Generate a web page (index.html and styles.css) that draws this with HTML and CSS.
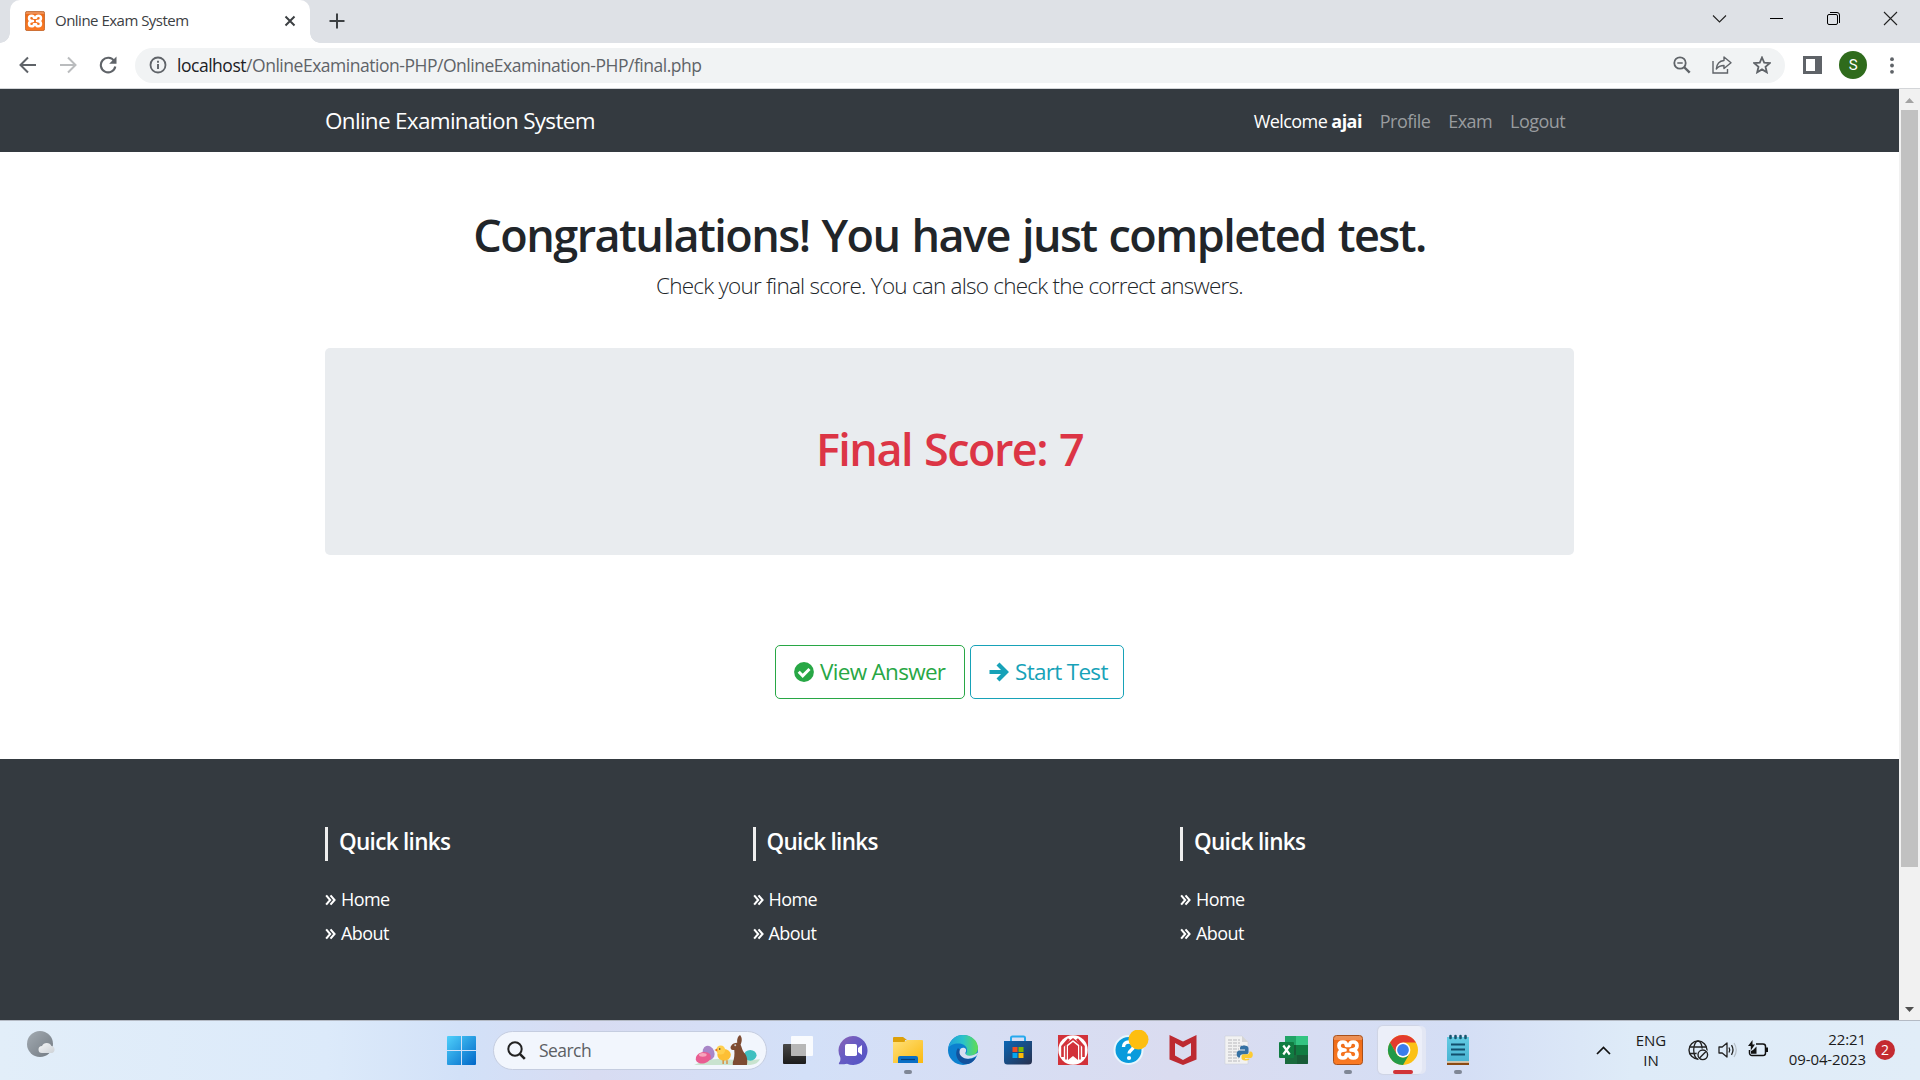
FILE: index.html
```html
<!DOCTYPE html>
<html lang="en">
<head>
<meta charset="utf-8">
<title>Online Exam System</title>
<link rel="stylesheet" href="styles.css">
</head>
<body>
<svg class="defs" aria-hidden="true">
  <defs>
    <linearGradient id="win" x1="0" y1="0" x2="1" y2="1"><stop offset="0" stop-color="#4fd0fb"/><stop offset="1" stop-color="#0067c8"/></linearGradient>
    <linearGradient id="orange" x1="0" y1="0" x2="0" y2="1"><stop offset="0" stop-color="#e9935c"/><stop offset=".14" stop-color="#f08c4e"/><stop offset=".15" stop-color="#ee6b17"/><stop offset="1" stop-color="#fb7a24"/></linearGradient>
    <linearGradient id="chat" x1="0" y1="0" x2="1" y2="1"><stop offset="0" stop-color="#8d62b4"/><stop offset=".4" stop-color="#6a5cc2"/><stop offset="1" stop-color="#4f52c6"/></linearGradient>
    <linearGradient id="folder" x1="0" y1="0" x2="1" y2="1"><stop offset="0" stop-color="#ffe07a"/><stop offset="1" stop-color="#fbb90f"/></linearGradient>
    <linearGradient id="edgeTop" x1="0" y1="0" x2="1" y2="0"><stop offset="0" stop-color="#1fa0dc"/><stop offset=".5" stop-color="#2bc3c9"/><stop offset="1" stop-color="#62dd50"/></linearGradient>
    <linearGradient id="store" x1="0" y1="0" x2="1" y2="1"><stop offset="0" stop-color="#0b66b5"/><stop offset="1" stop-color="#28304d"/></linearGradient>
    <linearGradient id="dark" x1="0" y1="0" x2="0" y2="1"><stop offset="0" stop-color="#484848"/><stop offset="1" stop-color="#1c1c1c"/></linearGradient>
    <linearGradient id="moon" x1="0" y1="0" x2="1" y2="1"><stop offset="0" stop-color="#a3abb2"/><stop offset="1" stop-color="#727a82"/></linearGradient>
    <linearGradient id="cloud" x1="0" y1="0" x2="1" y2="1"><stop offset="0" stop-color="#f4f5f6"/><stop offset="1" stop-color="#cdd2d7"/></linearGradient>
    <linearGradient id="note" x1="0" y1="0" x2="0" y2="1"><stop offset="0" stop-color="#63cbe3"/><stop offset="1" stop-color="#48b3d2"/></linearGradient>
    <symbol id="xampp" viewBox="0 0 30 30">
      <rect x=".5" y=".5" width="29" height="29" rx="3" fill="url(#orange)" stroke="#a9501a"/>
      <path d="M12 15c-4 0-6-1.400-6-4.300C6 8.200 7.600 7 9.800 7S13.400 8.300 13.400 10.300h3.200C16.600 8.300 18 7 20.200 7S24 8.200 24 10.700C24 13.600 22 15 18 15c4 0 6 1.400 6 4.300 0 2.500-1.600 3.700-3.800 3.700s-3.600-1.300-3.600-3.300h-3.200c0 2-1.400 3.300-3.600 3.300S6 21.800 6 19.300C6 16.400 8 15 12 15z" fill="none" stroke="#fff" stroke-width="3.700" stroke-linejoin="round"/>
    </symbol>
    <symbol id="angles" viewBox="0 0 10 11"><path d="M1 1.200 4.700 5.500 1 9.800M5 1.200 8.700 5.500 5 9.800" fill="none" stroke="#fff" stroke-width="1.900"/></symbol>
  </defs>
</svg>

<header class="browser">
  <div class="tabstrip">
    <div class="tab">
      <svg class="tab-icon" viewBox="0 0 30 30"><use href="#xampp"/></svg>
      <span class="tab-title">Online Exam System</span>
      <svg class="tab-close" viewBox="0 0 12 12"><path d="M1.500 1.500l9 9m0-9l-9 9" stroke="#3c4043" stroke-width="2"/></svg>
    </div>
    <svg class="new-tab" viewBox="0 0 16 16"><path d="M8 .5v15M.5 8h15" stroke="#3c4043" stroke-width="2"/></svg>
    <div class="window-controls">
      <svg viewBox="0 0 15 15"><path d="M1 4.500l6.500 6.500L14 4.500" fill="none" stroke="#222" stroke-width="1.100"/></svg>
      <svg viewBox="0 0 15 15"><path d="M1 7.500h13" stroke="#000" stroke-width="1"/></svg>
      <svg viewBox="0 0 15 15"><rect x="1.500" y="3.500" width="10" height="10" rx="1.500" fill="none" stroke="#000"/><path d="M4 1.500h7a2.500 2.500 0 0 1 2.500 2.500v8" fill="none" stroke="#000"/></svg>
      <svg viewBox="0 0 15 15"><path d="M1 1l13 13M14 1L1 14" stroke="#222" stroke-width="1.100"/></svg>
    </div>
  </div>
  <div class="toolbar">
    <nav class="history">
      <svg viewBox="0 0 18 18"><path d="M17 9H2M9 1.500L1.500 9 9 16.500" fill="none" stroke="#5f6368" stroke-width="2"/></svg>
      <svg viewBox="0 0 18 18"><path d="M1 9h15M9 1.500L16.500 9 9 16.500" fill="none" stroke="#babcbe" stroke-width="2"/></svg>
      <svg viewBox="0 0 18 18"><path d="M15.200 5A7.300 7.300 0 1 0 16.300 10.500" fill="none" stroke="#5f6368" stroke-width="2.100"/><path d="M17.500.5v7.300h-7.300z" fill="#5f6368"/></svg>
    </nav>
    <div class="omnibox">
      <svg class="info" viewBox="0 0 18 18"><circle cx="9" cy="9" r="7.500" fill="none" stroke="#5f6368" stroke-width="1.800"/><path d="M9 8v5M9 4.800v2" stroke="#5f6368" stroke-width="1.900"/></svg>
      <span class="url"><span class="host">localhost</span>/OnlineExamination-PHP/OnlineExamination-PHP/final.php</span>
      <div class="omni-actions">
        <svg viewBox="0 0 18 18"><circle cx="7" cy="7" r="5.700" fill="none" stroke="#5f6368" stroke-width="1.800"/><path d="M4.300 7h5.400" stroke="#5f6368" stroke-width="1.500"/><path d="M11 11l5.700 5.700" stroke="#5f6368" stroke-width="2.400"/></svg>
        <svg class="share" viewBox="0 0 20 18"><path d="M1 5v12h14.500v-4" fill="none" stroke="#5f6368" stroke-width="1.400"/><path d="M12 1l7 5.800-7 5.700V9.500C8.500 9.500 6 10.800 4.300 13c.4-4.500 3-8 7.700-8.500z" fill="none" stroke="#5f6368" stroke-width="1.400" stroke-linejoin="round"/></svg>
        <svg viewBox="0 0 18 18"><path d="M9 1.500l2.200 5.100 5.500.5-4.200 3.700 1.300 5.500L9 13.400l-4.800 2.900 1.300-5.500L1.300 7.100l5.500-.5z" fill="none" stroke="#5f6368" stroke-width="1.800"/></svg>
      </div>
    </div>
    <svg class="side-panel" viewBox="0 0 19 18"><path d="M0 0h19v18H0zM3 3v12h9V3z" fill="#5f6368" fill-rule="evenodd"/></svg>
    <span class="avatar">S</span>
    <svg class="menu" viewBox="0 0 4 17"><circle cx="2" cy="2.200" r="1.900"/><circle cx="2" cy="8.500" r="1.900"/><circle cx="2" cy="14.800" r="1.900"/></svg>
  </div>
</header>

<div class="viewport">
  <div class="page">
    <nav class="navbar">
      <div class="container nav-inner">
        <span class="brand">Online Examination System</span>
        <ul class="nav-links">
          <li class="current">Welcome <strong>ajai</strong></li>
          <li>Profile</li>
          <li>Exam</li>
          <li>Logout</li>
        </ul>
      </div>
    </nav>
    <main class="container result">
      <h1 class="headline">Congratulations! You have just completed test.</h1>
      <p class="lead">Check your final score. You can also check the correct answers.</p>
      <section class="score"><h1>Final Score: 7</h1></section>
      <div class="actions">
        <a class="btn btn-success"><svg viewBox="0 0 20 20"><circle cx="10" cy="10" r="9.900" fill="currentColor"/><path d="M4.700 9.800l4 4 6.800-6.800" fill="none" stroke="#fff" stroke-width="3"/></svg><span>View Answer</span></a>
        <a class="btn btn-info"><svg viewBox="0 0 20 20"><path d="M.5 10h17M9 2l8 8-8 8" fill="none" stroke="currentColor" stroke-width="4.200"/></svg><span>Start Test</span></a>
      </div>
    </main>
    <footer class="footer">
      <div class="container footer-cols">
        <section><h5>Quick links</h5><ul><li><svg><use href="#angles"/></svg>Home</li><li><svg><use href="#angles"/></svg>About</li></ul></section>
        <section><h5>Quick links</h5><ul><li><svg><use href="#angles"/></svg>Home</li><li><svg><use href="#angles"/></svg>About</li></ul></section>
        <section><h5>Quick links</h5><ul><li><svg><use href="#angles"/></svg>Home</li><li><svg><use href="#angles"/></svg>About</li></ul></section>
      </div>
    </footer>
  </div>
  <div class="scrollbar">
    <svg viewBox="0 0 9 5"><path d="M0 5l4.500-5L9 5z" fill="#a3a3a3"/></svg>
    <div class="thumb"></div>
    <svg viewBox="0 0 9 5"><path d="M0 0l4.500 5L9 0z" fill="#505050"/></svg>
  </div>
</div>

<footer class="taskbar">
  <svg class="weather" viewBox="0 0 30 28"><circle cx="13" cy="13" r="13" fill="url(#moon)"/><path d="M15 22a3.500 3.500 0 0 1 0-7 5.200 5.200 0 0 1 9.500 0A3.600 3.600 0 0 1 25 22z" fill="url(#cloud)"/></svg>
  <svg class="start" viewBox="0 0 29 29"><path d="M1 0h13v14H0V1a1 1 0 0 1 1-1zM15 0h13a1 1 0 0 1 1 1v13H15zM0 15h14v14H1a1 1 0 0 1-1-1zM15 15h14v13a1 1 0 0 1-1 1H15z" fill="url(#win)"/></svg>
  <div class="search">
    <svg class="lens" viewBox="0 0 19 19"><circle cx="8" cy="8" r="6.700" fill="none" stroke="#222" stroke-width="2"/><path d="M12.800 12.800l5 5" stroke="#222" stroke-width="2.600"/></svg>
    <span>Search</span>
    <svg class="easter" viewBox="0 0 68 32">
      <path d="M0 31Q16 23 34 25t34 0q-2 5-10 6z" fill="#c9e3cf"/>
      <ellipse cx="15" cy="18.500" rx="6" ry="7.500" fill="#a886c8" transform="rotate(-20 15 18.500)"/>
      <ellipse cx="9.500" cy="23.500" rx="8" ry="5.800" fill="#e95d92" transform="rotate(-14 9.500 23.500)"/><ellipse cx="9" cy="20.500" rx="4" ry="2" fill="#f7a6bd"/>
      <ellipse cx="58" cy="21" rx="6.500" ry="5.500" fill="#3fc0c0"/>
      <ellipse cx="31" cy="20.500" rx="7" ry="6" fill="#fdbf35"/><circle cx="27.500" cy="15.500" r="4.600" fill="#ffcf4d"/><path d="M24 14l-3 1.500 3 1.500z" fill="#e8751c"/><circle cx="26.500" cy="14.500" r=".8" fill="#333"/><path d="M30 26v4m4-4v4" stroke="#dc7a1d" stroke-width="1.200"/>
      <path d="M40 31v-3c1.500-3 2-8 1.500-12.500-3 .5-4.500-2-3.500-4 1.500-2.500 4-3.500 6.500-3.500-.5-4 1-7 3-8 2.500 3 2 7 .5 10 1.500 3 1.500 5 3.500 8 3.500 3 4 9 3 13z" fill="#7d4b32"/><circle cx="42.500" cy="10.500" r="1" fill="#ccc"/>
    </svg>
  </div>
  <div class="apps">
    <span class="app"><svg viewBox="0 0 32 32"><rect x="1" y="10" width="23" height="20" rx="1" fill="url(#dark)"/><rect x="9" y="2" width="22" height="20" rx="1" fill="#fff" opacity=".86"/><path d="M9 10h15v12H9z" fill="#a4a4a4" opacity=".7"/></svg></span>
    <span class="app"><svg viewBox="0 0 32 32"><path d="M16 2a14.500 14.500 0 1 1-6 27.700Q6 30.500 2.300 30.200 1.300 29.500 2.500 28.300 3.800 26.500 3.300 23.500A14.500 14.500 0 0 1 16 2z" fill="url(#chat)"/><rect x="8" y="10" width="12" height="12" rx="1.800" fill="#fff"/><path d="M21 14l4-3v10l-4-3z" fill="#fff"/></svg></span>
    <span class="app running"><svg viewBox="0 0 32 32"><path d="M1 4a1 1 0 0 1 1-1h9l4 3h-2v6H1z" fill="#dda009"/><path d="M1 8h11l3-2h15a1 1 0 0 1 1 1v22H1z" fill="url(#folder)"/><path d="M6 29v-5a2 2 0 0 1 2-2h16a2 2 0 0 1 2 2v5z" fill="#0a6fc5"/><path d="M9 25.500h14" stroke="#063f78" stroke-width="1.200"/></svg></span>
    <span class="app"><svg viewBox="0 0 32 32"><circle cx="16" cy="16" r="15" fill="#0c80cf"/><path d="M1.500 14C3 5 9 1 16 1c9 0 15 6 15 13 0 5-4 8-9 8-3 0-4-1-3-2.500 1-1.500 1-2 1-3.500 0-4-4-6.500-8.500-6.500C6.500 9.500 2.500 11.500 1.500 14z" fill="url(#edgeTop)"/><path d="M11 14c-5 7 1 17 10 16 4-1 7-4 8-7-6 4-17 2-16-7z" fill="#13529d"/><path d="M18.500 18.500c1-1.500 1-4-1.500-4.700-2.500-.4-4.500 1.200-4.500 4.200 0 4.500 5 7.500 10 6.500 3-.4 5-1.500 7-2.800l3-3.700-6 3c-4 1.500-9 1-8-2.500z" fill="#d9dff1"/></svg></span>
    <span class="app"><svg viewBox="0 0 32 32"><path d="M9 8V4a1.500 1.500 0 0 1 1.500-1.500h11A1.500 1.500 0 0 1 23 4v4" fill="none" stroke="#27a9ee" stroke-width="2"/><path d="M2 7h28v20a3.500 3.500 0 0 1-3.500 3.500h-21A3.500 3.500 0 0 1 2 27z" fill="url(#store)"/><path d="M10.500 13h5v5h-5z" fill="#f04e23"/><path d="M16.500 13h5v5h-5z" fill="#7fba00"/><path d="M10.500 19h5v5h-5z" fill="#05a6f0"/><path d="M16.500 19h5v5h-5z" fill="#ffba08"/></svg></span>
    <span class="app"><svg viewBox="0 0 32 32"><path d="M1 1h30v30H1z" fill="#d2323a"/><circle cx="16" cy="16" r="14.700" fill="#fff"/><path d="M11 12l5-4 5 4v14l-5-4-5 4z" fill="#d2323a"/><path d="M9 25.500V10.500l7-5.500 7 5.500v15" fill="none" stroke="#d2323a" stroke-width="1.600"/><path d="M5.500 23V12.500L12 5M26.500 23V12.500L20 5" fill="none" stroke="#d2323a" stroke-width="2.600"/></svg></span>
    <span class="app"><svg class="wide" viewBox="0 0 42 40"><circle cx="21.500" cy="20" r="14" fill="#0a9bdc" stroke="#e9f6fd" stroke-width="2"/><path d="M16.500 17c0-3.500 2.300-5 5-5s5 1.700 5 4.500c0 3.500-4.500 3.500-4.500 7" fill="none" stroke="#fff" stroke-width="3.400"/><circle cx="22" cy="28" r="2.100" fill="#fff"/><circle cx="31.500" cy="9.500" r="10" fill="#fdbe10"/></svg></span>
    <span class="app"><svg viewBox="0 0 32 32"><path d="M2.500 1L16 7.500 29.500 1v24.500L16 31 2.500 25.500zM8 9v12.500L16 26l8-4.500V9l-8 4.500z" fill="#bd2a31" fill-rule="evenodd"/></svg></span>
    <span class="app"><svg viewBox="0 0 32 32"><path d="M3 2h17l6 6v22H3z" fill="#f2f2f2" stroke="#cfd2d8" stroke-width=".6"/><path d="M20 2v6h6" fill="#d6d6d6"/><path d="M6 6h12M6 9h12M6 12h17M6 15h11M6 18h10M6 21h10M6 24h11M6 27h12" stroke="#b8b8bc" stroke-width="1" stroke-dasharray="4 1"/><path d="M22 11.500c3 0 4.500 1 4.500 3V18c0 1.500-1 2.500-2.500 2.500h-4c-1.500 0-2 1-2 3h-1c-1.500 0-2.300-1.500-2.300-3.500s1-3.500 2.500-3.500H23v-1h-5V14c0-1.700 1.500-2.500 4-2.500z" fill="#3571a3"/><path d="M23.500 26.500c-3 0-4-1-4-2.500v-1.500c0-1.500 1-2.300 2.500-2.300h3.500c1.500 0 2-.9 2-2.700h1c1.600 0 2.300 1.300 2.300 3.300s-1 3.200-2.300 3.200H23v.8h4.500c0 1-1 1.700-4 1.700z" fill="#fccb33"/></svg></span>
    <span class="app"><svg viewBox="0 0 32 32"><path d="M8 2h22a1 1 0 0 1 1 1v26a1 1 0 0 1-1 1H9a1 1 0 0 1-1-1z" fill="#21a366"/><path d="M19 2h12v9H19z" fill="#33c481"/><path d="M8 11h12v10H8zM19 21h12v8a1 1 0 0 1-1 1H19z" fill="#185c37"/><path d="M19 11h12v10H19z" fill="#107c41"/><path d="M8 21h12v9H8z" fill="#1a6b3d"/><rect x="2" y="8" width="15" height="16" rx="1" fill="#107c41"/><path d="M6.300 11.500l6.400 9m0-9l-6.400 9" stroke="#fff" stroke-width="2.200"/></svg></span>
    <span class="app running"><svg class="xampp" viewBox="0 0 30 30"><use href="#xampp"/></svg></span>
    <span class="app active"><svg viewBox="0 0 32 32"><circle cx="16" cy="16" r="15" fill="#fbc116"/><path d="M3 8.500A15 15 0 0 1 29 8.500H16L9.500 19.700z" fill="#e33b2e"/><path d="M3 8.500A15 15 0 0 0 16 31l6.500-11.300a7.500 7.500 0 0 1-13 0z" fill="#229a49"/><circle cx="16" cy="16" r="7.400" fill="#fff"/><circle cx="16" cy="16" r="5.900" fill="#3b7ded"/></svg></span>
    <span class="app running"><svg viewBox="0 0 32 32"><path d="M5 27h22v4H5z" fill="#8a4a12"/><path d="M5 3h22v24.500H5z" fill="url(#note)"/><path d="M5 28h22" stroke="#f3ead9" stroke-width="1.400"/><path d="M9 10.500h14M9 15.500h14M9 20.500h14" stroke="#124f6d" stroke-width="1.800"/><path d="M8.500 2v2M13.500 2v2M18.500 2v2M23.500 2v2" stroke="#17566f" stroke-width="2.600" stroke-linecap="round"/></svg></span>
  </div>
  <div class="tray">
    <svg class="up" viewBox="0 0 15 9"><path d="M1 8l6.500-6.500L14 8" fill="none" stroke="#111" stroke-width="1.700"/></svg>
    <div class="lang">ENG<br>IN</div>
    <svg class="globe" viewBox="0 0 21 21"><circle cx="10" cy="10" r="9" fill="none" stroke="#222" stroke-width="1.400"/><ellipse cx="10" cy="10" rx="4.300" ry="9" fill="none" stroke="#222" stroke-width="1.300"/><path d="M1.500 7h17M1.500 13.500h12" stroke="#222" stroke-width="1.300"/><circle cx="14.800" cy="14.800" r="6.200" fill="#e1edf8"/><circle cx="14.800" cy="14.800" r="4.800" fill="none" stroke="#222" stroke-width="1.400"/><path d="M11.500 18l6.500-6.500" stroke="#222" stroke-width="1.400"/></svg>
    <svg class="speaker" viewBox="0 0 20 18"><path d="M1 6h3.200L9 2v14l-4.800-4H1z" fill="none" stroke="#222" stroke-width="1.300" stroke-linejoin="round"/><path d="M11 6.500q1.500 2.500 0 5M13.500 4.200q3 4.800 0 9.600" fill="none" stroke="#222" stroke-width="1.300"/><path d="M16 2q4.500 7 0 14" fill="none" stroke="#b6bec6" stroke-width="1.200"/></svg>
    <svg class="battery" viewBox="0 0 21 17"><path d="M8 4h7a2.500 2.500 0 0 1 2.500 2.500v6.500a2.500 2.500 0 0 1-2.500 2.500H4A2.500 2.500 0 0 1 1.500 13V10" fill="none" stroke="#111" stroke-width="1.500"/><path d="M17.500 7.500H20v4.500h-2.500zM3 13.800V11l2-1 3.500-3.500v7.300zM4.500 0L0 6h2.800v4.500L7 4.500H4.500z" fill="#111"/></svg>
    <div class="clock">22:21<br>09-04-2023</div>
    <span class="badge">2</span>
  </div>
</footer>
</body>
</html>
```

FILE: styles.css
```css
* { box-sizing: border-box; }

body {
  margin: 0;
  width: 1920px;
  height: 1080px;
  overflow: hidden;
  display: flex;
  flex-direction: column;
  background: #fff;
  color: #212529;
  font-family: "Open Sans", "Noto Sans", sans-serif;
  font-size: 18px;
  line-height: 1.5;
  letter-spacing: -0.031em;
}

svg { display: block; flex: none; }
.defs { position: absolute; width: 0; height: 0; }
h1, h5, p, ul { margin: 0; padding: 0; }
ul { list-style: none; }

/* Browser window */
.browser { height: 89px; border-bottom: 1px solid #d3d5d8; flex: none; }
.tabstrip { display: flex; align-items: center; height: 43px; padding-left: 10px; background: #dee1e6; }
.tab {
  position: relative;
  display: flex;
  align-items: center;
  width: 300px;
  height: 43px;
  padding: 0 14px 1px 15px;
  background: #fff;
  border-radius: 10px 10px 0 0;
}
.tab::before, .tab::after {
  content: "";
  position: absolute;
  bottom: 0;
  width: 10px;
  height: 10px;
}
.tab::before { left: -10px; background: radial-gradient(circle at 0 0, #dee1e6 9.500px, #fff 10px); }
.tab::after { right: -10px; background: radial-gradient(circle at 100% 0, #dee1e6 9.500px, #fff 10px); }
.tab-icon { width: 20px; height: 20px; }
.tab-title { margin-left: 10px; padding-bottom: 2px; font-size: 15px; letter-spacing: -0.034em; color: #3c4043; flex: 1; }
.tab-close { width: 12px; height: 12px; }
.new-tab { width: 16px; height: 16px; margin: 0 0 1px 19px; }
.window-controls { display: flex; margin-left: auto; height: 100%; padding-right: 1px; }
.window-controls svg { width: 57px; height: 15px; margin-top: 11px; }

.toolbar { display: flex; align-items: center; height: 45px; padding: 0 26px 1px 19px; }
.history { display: flex; gap: 22px; margin-right: 18px; }
.history svg { width: 18px; height: 18px; }
.omnibox {
  display: flex;
  align-items: center;
  width: 1650px;
  height: 35px;
  padding: 0 14px;
  border-radius: 18px;
  background: #f1f3f4;
}
.info { width: 18px; height: 18px; }
.url { margin-left: 10px; padding-bottom: 1px; font-size: 17.500px; line-height: 34px; color: #5f6368; letter-spacing: -0.027em; }
.host { color: #202124; }
.omni-actions { display: flex; align-items: center; gap: 21px; margin-left: auto; }
.omni-actions svg { width: 18px; height: 18px; }
.omni-actions .share { width: 20px; }
.side-panel { width: 19px; height: 18px; margin-left: 18px; }
.avatar {
  width: 28px;
  height: 28px;
  margin-left: 17px;
  border-radius: 50%;
  background: #2f6b1c;
  color: #fff;
  font: 15px/28px Roboto, sans-serif;
  text-align: center;
}
.menu { width: 4px; height: 17px; margin-left: auto; fill: #5f6368; }

/* Web page */
.viewport { display: flex; height: 931px; flex: none; }
.page { width: 1899px; }
.container { width: 1249px; margin: 0 auto; }
.navbar { height: 63px; background: #343a40; }
.nav-inner { display: flex; align-items: center; justify-content: space-between; height: 63px; padding-right: 9px; }
.brand { font-size: 22.500px; letter-spacing: -0.031em; color: #fff; }
.nav-links { display: flex; gap: 18px; padding-top: 1px; color: #999c9f; }
.nav-links .current { color: #fff; }
.result { height: 607px; padding-top: 56px; text-align: center; }
.headline, .score h1 {
  font-size: 45px;
  font-weight: 600;
  line-height: 54px;
  letter-spacing: -0.034em;
  word-spacing: 0.039em;
}
.lead { margin-top: 7px; font-size: 22.500px; font-weight: 300; line-height: 34px; letter-spacing: -0.034em; }
.score {
  height: 207px;
  margin-top: 45px;
  padding-top: 74px;
  border-radius: 5px;
  background: #e9ecef;
  color: #dc3545;
}
.actions { display: flex; justify-content: center; gap: 5px; margin-top: 90px; }
.btn {
  display: flex;
  align-items: center;
  gap: 6px;
  height: 54px;
  padding: 0 0 0 18px;
  border: 1px solid;
  border-radius: 5px;
  font-size: 22.500px;
  letter-spacing: -0.031em;
  white-space: nowrap;
}
.btn svg { width: 20px; height: 20px; }
.btn-success { width: 190px; color: #28a745; }
.btn-info { width: 154px; color: #17a2b8; }

.footer { height: 261px; padding-top: 68px; background: #343a40; color: #fff; }
.footer-cols { display: grid; grid-template-columns: 427.500px 427.500px 1fr; }
.footer h5 {
  height: 34px;
  padding-left: 11px;
  border-left: 3px solid #eee;
  font-size: 22.500px;
  font-weight: 600;
  line-height: 29px;
  letter-spacing: -0.031em;
}
.footer ul { margin-top: 21px; }
.footer li { display: flex; align-items: center; gap: 5px; height: 34px; }
.footer li svg { width: 11px; height: 12px; margin-top: 2px; }

.scrollbar { display: flex; flex-direction: column; align-items: center; width: 21px; padding: 9px 0 8px; background: #f1f1f1; }
.scrollbar svg { width: 9px; height: 5px; }
.thumb { width: 17px; height: 757px; margin: 7px 0 auto; background: #c1c1c1; }

/* Taskbar */
.taskbar {
  display: flex;
  align-items: center;
  height: 60px;
  padding: 0 25px 1px 27px;
  border-top: 1px solid #b4bac4;
  background: linear-gradient(90deg, #e2eef9 0, #dceafa 17%, #d2e1f8 24%, #d8dcf2 31%, #d3e0f8 42%, #dadcf0 61%, #d4def5 76%, #deebf8 85%, #e1edf8 100%);
}
.weather { width: 30px; height: 28px; margin-top: -10px; }
.start { width: 29px; height: 29px; margin-left: 390px; }
.search {
  display: flex;
  align-items: center;
  width: 274px;
  height: 39px;
  margin-left: 17px;
  padding: 0 6px 0 13px;
  border: 1px solid #c5cde0;
  border-radius: 20px;
  background: #f2f6fd;
  color: #5c5f64;
}
.lens { width: 19px; height: 19px; margin-right: 13px; }
.search span { font-size: 17.500px; line-height: 36px; }
.easter { width: 66px; height: 31px; margin-left: auto; }
.apps { display: flex; margin-left: 3px; }
.app { position: relative; display: flex; align-items: center; justify-content: center; width: 55px; height: 58px; }
.app svg { position: relative; width: 32px; height: 32px; }
.app .wide { width: 42px; height: 40px; }
.app .xampp { width: 30px; height: 30px; }
.app.running::after, .app.active::after {
  content: "";
  position: absolute;
  bottom: 5px;
  left: 24px;
  width: 8px;
  height: 4px;
  border-radius: 2px;
  background: #7f8796;
}
.app.active::after { left: 18px; width: 20px; background: #d13438; }
.app.active::before {
  content: "";
  position: absolute;
  top: 5px;
  left: 3px;
  width: 44px;
  height: 48px;
  border-radius: 5px;
  background: #eceff9;
  box-shadow: 4px 0 0 #e3e7f4, 0 0 1px 1px #cfd4e4;
}
.tray { display: flex; align-items: center; margin-left: auto; color: #1b1b1b; font-size: 15px; line-height: 20px; letter-spacing: 0; }
.up { width: 15px; height: 9px; }
.lang { width: 40px; margin-left: 20px; padding-bottom: 1px; text-align: center; }
.globe { width: 21px; height: 21px; margin-left: 17px; }
.speaker { width: 20px; height: 18px; margin-left: 9px; }
.battery { width: 21px; height: 17px; margin: -3px 0 0 10px; }
.clock { width: 97px; padding-bottom: 3px; text-align: right; letter-spacing: -0.1px; }
.badge {
  width: 20px;
  height: 20px;
  margin-left: 9px;
  border-radius: 50%;
  background: #c42b31;
  color: #fff;
  font-size: 14px;
  line-height: 19px;
  text-align: center;
}
```
